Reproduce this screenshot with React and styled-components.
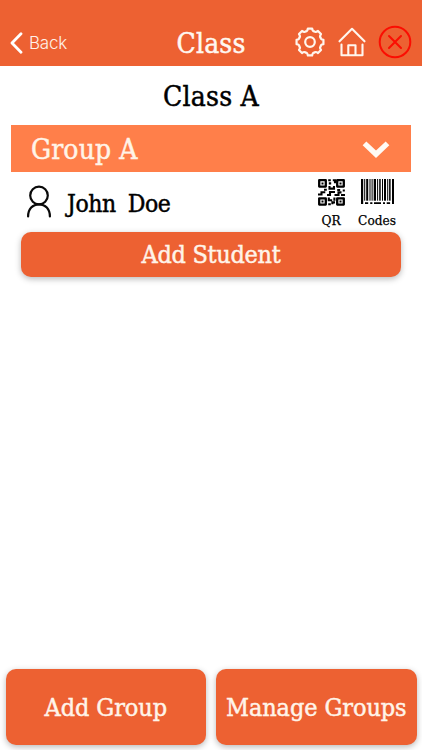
import React from 'react';
import styled, { createGlobalStyle } from 'styled-components';

const GlobalStyle = createGlobalStyle`
  * {
    box-sizing: border-box;
  }

  body {
    margin: 0;
    background: #ffffff;
    font-family: "DejaVu Serif Condensed", "DejaVu Serif", serif;
    font-stretch: condensed;
    -webkit-text-stroke: 0.45px currentColor;
  }

  button {
    font: inherit;
    border: none;
    padding: 0;
    cursor: pointer;
  }

  svg {
    display: block;
  }
`;

// Eight rounded teeth around the hub
const gearPath = () => {
  const point = (radius, degrees) => {
    const angle = (degrees * Math.PI) / 180;
    return `${(15 + radius * Math.sin(angle)).toFixed(2)} ${(15 - radius * Math.cos(angle)).toFixed(2)}`;
  };
  let d = `M${point(13.6, -9)}`;
  for (let i = 0; i < 8; i += 1) {
    const a = i * 45;
    d += `L${point(13.6, a + 9)}`;
    d += `Q${point(10.6, a + 15)} ${point(11.6, a + 22.5)}`;
    d += `Q${point(10.6, a + 30)} ${point(13.6, a + 36)}`;
  }
  return `${d}Z`;
};

const GearIcon = () => (
  <svg width="30" height="30" viewBox="0 0 30 30" fill="none" stroke="#fff6ee" strokeWidth="2.2" strokeLinejoin="round">
    <path d={gearPath()} />
    <circle cx="15" cy="15" r="4.8" />
  </svg>
);

const HomeIcon = () => (
  <svg width="28" height="30" viewBox="0 0 28 30" fill="none" stroke="#fff6ee" strokeWidth="2.1" strokeLinecap="round" strokeLinejoin="round">
    <path d="M1.5 14.3 14 1.8l12.5 12.5" />
    <path d="M3.5 17.5v10.8h21V17.5" />
    <path d="M10.3 28v-9.7h7.2V28" />
  </svg>
);

const CloseIcon = () => (
  <svg width="34" height="34" viewBox="0 0 34 34" fill="none" stroke="#fb0d02" strokeWidth="2" strokeLinecap="round">
    <circle cx="17" cy="17" r="15.3" />
    <path d="m11 11 12 12M23 11 11 23" />
  </svg>
);

const PersonIcon = () => (
  <svg width="26" height="34" viewBox="0 0 26 34" fill="none" stroke="#0a0a0a" strokeWidth="2.2" strokeLinecap="round">
    <circle cx="13" cy="10.5" r="8.8" />
    <path d="M2.1 31.5C2.1 24 6.7 19.3 13 19.3S23.9 24 23.9 31.5" />
  </svg>
);

const QrIcon = () => (
  <svg width="27" height="27" viewBox="0 0 27 27" fill="none" stroke="#000">
    <path strokeWidth="2.3" strokeLinejoin="round" d="M1.2 1.2h6.6v6.4H1.2ZM19.2 1.2h6.6v6.4h-6.6ZM1.2 19.3h6.6v6.3H1.2ZM19.2 19.3h6.6v6.3h-6.6Z" />
    <path strokeWidth="2" d="M3.5 4.4h2M21.5 4.4h2M3.5 22.4h2M21.5 22.4h2" />
    <path strokeWidth="2.1" d="M10.2 1.2h2.6M14.8 1.2h2.2v3M10.8 4.4h2.4M16 7v2.6h-4.5V7M0 15.5h3.5v-2.3h3.8M6 10.8h2.8M9 16h3v-3h5M19.2 11h3M16.5 16h4v-2.6h3M23 16h4M25.8 10.5v2M10.8 18.6v2.6h3.4M16.4 18.4v3.4M10.2 25.2h2.6M14.4 25.2v-1.8h2.6" />
  </svg>
);

const bars = [
  [0, 2.2], [3.2, 1], [5.2, 2], [8.5, 1], [10.6, 1], [12.7, 2.3], [16.1, 1],
  [18.2, 1.5], [21, 1], [23, 2], [26.2, 1], [28.1, 1.5], [31, 2],
];

const BarcodeIcon = () => (
  <svg width="33" height="26" viewBox="0 0 33 26" fill="#000">
    {bars.map(([x, width], i) => (
      <rect key={x} x={x} width={width} height={i === 0 || i === bars.length - 1 ? 25 : 21.7} />
    ))}
    <path d="M4 23.2h3.2V25H4ZM9.2 23.2h2.2V25H9.2ZM13 23.2h7V25h-7ZM22 23.2h2V25h-2ZM25.7 23.2h3.4V25h-3.4Z" />
  </svg>
);

const App = () => (
  <>
    <GlobalStyle />
    <Screen>
      <Header>
        <BackButton>
          <svg width="13" height="22" viewBox="0 0 13 22" fill="none" stroke="#ffffff" strokeWidth="2.8" strokeLinecap="round" strokeLinejoin="round">
            <path d="m11 1.7-9 9.3 9 9.3" />
          </svg>
          Back
        </BackButton>
        <HeaderTitle>Class</HeaderTitle>
        <HeaderActions>
          <GearIcon />
          <HomeIcon />
          <CloseIcon />
        </HeaderActions>
      </Header>

      <ClassName>Class A</ClassName>

      <GroupBar>
        <GroupName>Group A</GroupName>
        <svg width="28" height="19" viewBox="0 0 28 19" fill="none" stroke="#fffaf5" strokeWidth="5.4">
          <path d="m2.5 3.4 11.5 10.8L25.5 3.4" />
        </svg>
      </GroupBar>

      <StudentRow>
        <PersonIcon />
        <StudentName>John&nbsp; Doe</StudentName>
        <CodeButtons>
          <CodeButton $width={30}>
            <QrIcon />
            <span>QR</span>
          </CodeButton>
          <CodeButton $width={42}>
            <BarcodeIcon />
            <span>Codes</span>
          </CodeButton>
        </CodeButtons>
      </StudentRow>

      <AddStudentButton>Add Student</AddStudentButton>

      <Footer>
        <FooterButton>Add Group</FooterButton>
        <FooterButton>Manage Groups</FooterButton>
      </Footer>
    </Screen>
  </>
);

const Screen = styled.div`
  display: flex;
  flex-direction: column;
  height: 750px;
  overflow: hidden;
  color: #000000;
`;

const Header = styled.header`
  display: grid;
  grid-template-columns: 1fr auto 1fr;
  align-items: center;
  height: 65.5px;
  padding: 18px 10px 0;
  background: #ed6132;
  flex-shrink: 0;
`;

const BackButton = styled.button`
  display: flex;
  align-items: center;
  gap: 6px;
  padding-top: 2px;
  background: none;
  color: #fff1e8;
  font-family: Inter, sans-serif;
  font-size: 17px;
  font-weight: 300;
  letter-spacing: -0.2px;
  -webkit-text-stroke: 0;
`;

const HeaderTitle = styled.h1`
  margin: 0;
  padding-top: 4px;
  color: #fff8f1;
  font-size: 28px;
  font-weight: 400;
  letter-spacing: 0.2px;
  line-height: 42px;
`;

const HeaderActions = styled.div`
  display: flex;
  align-items: center;
  justify-content: flex-end;
  gap: 13px;

  svg:nth-child(2) {
    margin-right: -1px;
  }
`;

const ClassName = styled.h2`
  margin: 0;
  height: 59.5px;
  font-size: 28px;
  font-weight: 400;
  letter-spacing: 0.2px;
  line-height: 61px;
  text-align: center;
  flex-shrink: 0;
`;

const GroupBar = styled.div`
  display: flex;
  align-items: center;
  justify-content: space-between;
  height: 46.5px;
  margin: 0 11px;
  padding: 2px 21px 0 20px;
  background: #ff7f4a;
  flex-shrink: 0;
`;

const GroupName = styled.span`
  color: #fff4e8;
  font-size: 28px;
  letter-spacing: 0.1px;
`;

const StudentRow = styled.div`
  display: flex;
  align-items: center;
  height: 60px;
  padding: 0 24px 0 26px;
  flex-shrink: 0;
`;

const StudentName = styled.span`
  flex: 1;
  margin-left: 15px;
  padding-top: 4px;
  font-size: 24.5px;
  letter-spacing: -0.4px;
  word-spacing: -0.7px;
  line-height: 56px;
`;

const CodeButtons = styled.div`
  display: flex;
  gap: 10px;
  padding-top: 3px;
`;

const CodeButton = styled.button`
  display: flex;
  flex-direction: column;
  align-items: center;
  justify-content: space-between;
  width: ${({ $width }) => $width}px;
  height: 49px;
  background: none;
  color: #000000;
  font-size: 13.5px;
  line-height: 16px;
  -webkit-text-stroke: 0.25px currentColor;
`;

const ActionButton = styled.button`
  border-radius: 10px;
  background: #ed6132;
  color: #fff4e9;
  font-size: 25px;
  white-space: nowrap;
  box-shadow: 0 2px 6px rgba(0, 0, 0, 0.28);
`;

const AddStudentButton = styled(ActionButton)`
  height: 45px;
  margin: 0 21px;
  letter-spacing: -0.3px;
  flex-shrink: 0;
`;

const Footer = styled.footer`
  display: flex;
  gap: 10px;
  margin-top: auto;
  padding: 0 5.5px 5px;
`;

const FooterButton = styled(ActionButton)`
  flex: 1 1 0;
  height: 76px;
  letter-spacing: -0.1px;
`;

export default App;
